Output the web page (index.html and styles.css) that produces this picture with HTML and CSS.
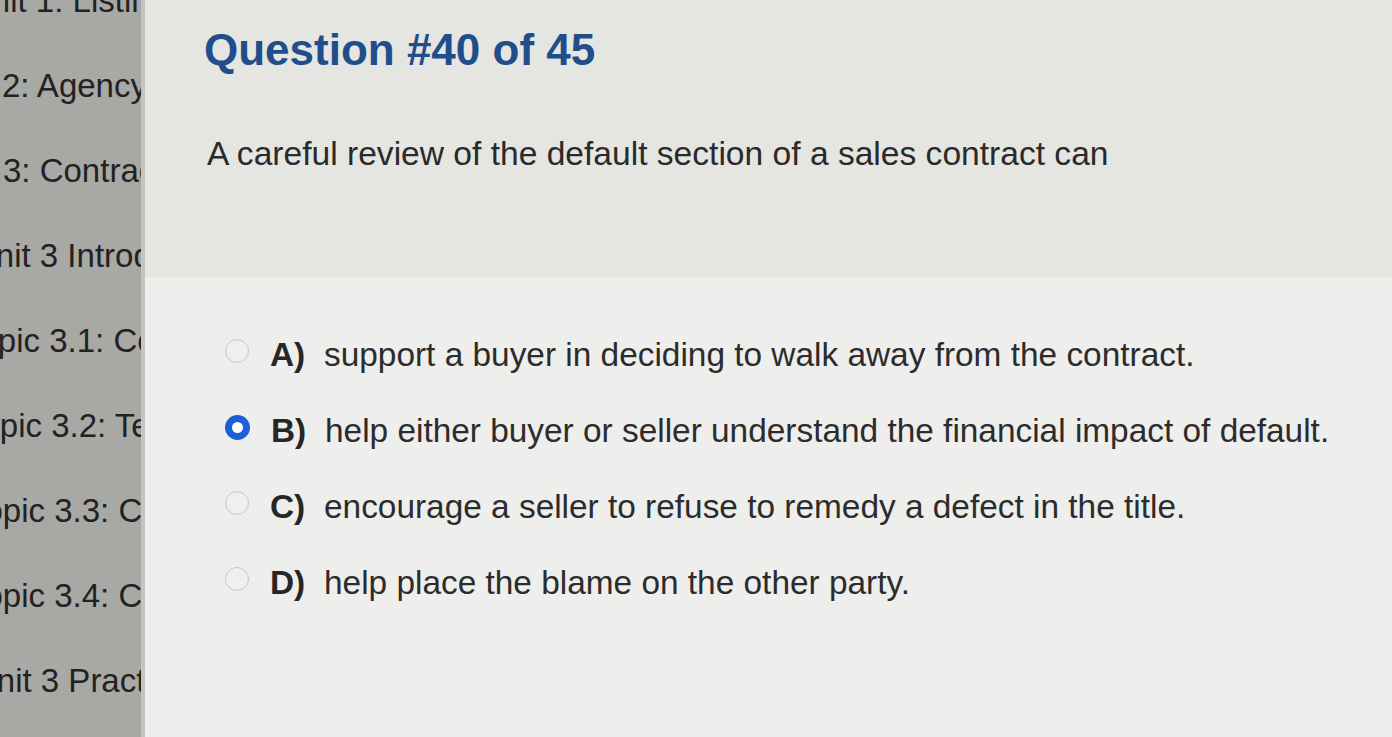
FILE: index.html
```html
<!DOCTYPE html>
<html lang="en">
<head>
<meta charset="utf-8">
<title>Question #40 of 45</title>
<link rel="stylesheet" href="styles.css">
</head>
<body>
<div class="app">
  <nav class="sidebar">
    <div class="nav-item first" style="margin-left:-32px">Unit 1: Listing Agreements</div>
    <div class="nav-item" style="margin-left:2px">2: Agency Relationships</div>
    <div class="nav-item" style="margin-left:3px">3: Contracts</div>
    <div class="nav-item" style="margin-left:-28px">Unit 3 Introduction</div>
    <div class="nav-item" style="margin-left:-37px">Topic 3.1: Contract Basics</div>
    <div class="nav-item" style="margin-left:-35px">Topic 3.2: Terms</div>
    <div class="nav-item" style="margin-left:-32px">Topic 3.3: Contingencies</div>
    <div class="nav-item" style="margin-left:-32px">Topic 3.4: Closing</div>
    <div class="nav-item" style="margin-left:-27px">Unit 3 Practice Exam</div>
  </nav>
  <main class="main">
    <section class="question-head">
      <h1 class="title">Question #40 of 45</h1>
      <p class="prompt">A careful review of the default section of a sales contract can</p>
    </section>
    <ul class="options">
      <li class="option"><span class="radio"></span><span class="letter">A)</span><span class="text">support a buyer in deciding to walk away from the contract.</span></li>
      <li class="option"><span class="radio selected"></span><span class="letter">B)</span><span class="text">help either buyer or seller understand the financial impact of default.</span></li>
      <li class="option"><span class="radio"></span><span class="letter">C)</span><span class="text">encourage a seller to refuse to remedy a defect in the title.</span></li>
      <li class="option"><span class="radio"></span><span class="letter">D)</span><span class="text">help place the blame on the other party.</span></li>
    </ul>
  </main>
</div>
</body>
</html>
```
FILE: styles.css
```css
* { box-sizing: border-box; }
html, body { margin: 0; padding: 0; }
body {
  width: 1392px;
  height: 737px;
  overflow: hidden;
  font-family: "Liberation Sans", Arial, Helvetica, sans-serif;
  background: #eeeeec;
}
.app {
  display: flex;
  height: 737px;
}
.sidebar {
  width: 145px;
  flex: none;
  background: #a8a8a5;
  overflow: hidden;
  border-right: 4px solid #c4c4c1;
  color: #222222;
}
.nav-item {
  font-size: 33px;
  line-height: 85px;
  height: 85px;
  white-space: nowrap;
}
.nav-item.first { margin-top: -42px; }
.main {
  flex: 1;
  display: flex;
  flex-direction: column;
}
.question-head {
  height: 277px;
  background: #e5e5e2;
  padding: 25px 0 0 59px;
}
.title {
  margin: 0;
  font-size: 44px;
  line-height: 1.15;
  font-weight: bold;
  color: #1f4e8a;
}
.prompt {
  margin: 59px 0 0 3px;
  font-size: 33.6px;
  line-height: 1.15;
  color: #2a2a2a;
}
.options {
  list-style: none;
  margin: 0;
  padding: 40px 0 0 80px;
}
.option {
  height: 76px;
  display: flex;
  align-items: center;
  gap: 0;
  font-size: 33.4px;
  line-height: 1.15;
  color: #2c2c2c;
}
.radio {
  width: 24px;
  height: 24px;
  border-radius: 50%;
  border: 1.5px solid #c6c6c4;
  background: #efefed;
  flex: none;
  margin-bottom: 8px;
  margin-right: 21px;
}
.radio.selected {
  border: 7px solid #1d5fd6;
  background: #ffffff;
  width: 25px;
  height: 25px;
}
.letter {
  font-weight: bold;
  flex: none;
  width: 36px;
  margin-right: 18px;
  color: #262626;
}
.text { white-space: nowrap; }
```
